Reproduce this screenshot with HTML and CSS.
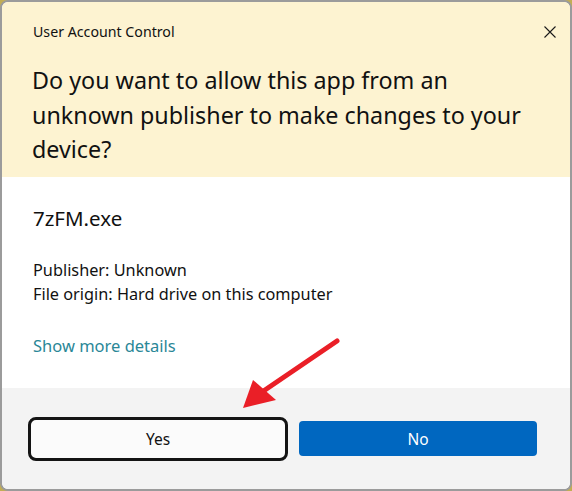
FILE: index.html
```html
<!DOCTYPE html>
<html lang="en">
<head>
<meta charset="utf-8">
<title>User Account Control</title>
<link rel="stylesheet" href="styles.css">
</head>
<body>
<div class="dialog">
  <header class="header">
    <div class="title-row">
      <span class="title">User Account Control</span>
      <svg class="close" width="12" height="12" viewBox="0 0 12 12" aria-hidden="true">
        <path d="M0.5 0.5 L11.5 11.5 M11.5 0.5 L0.5 11.5" stroke="#1a1a1a" stroke-width="1.1" fill="none"/>
      </svg>
    </div>
    <h1 class="question">Do you want to allow this app from an unknown publisher to make changes to your device?</h1>
  </header>
  <section class="content">
    <div class="app-name">7zFM.exe</div>
    <div class="meta">
      <div>Publisher: Unknown</div>
      <div>File origin: Hard drive on this computer</div>
    </div>
    <a class="more" href="#">Show more details</a>
  </section>
  <footer class="footer">
    <button class="btn btn-yes">Yes</button>
    <button class="btn btn-no">No</button>
  </footer>
  <svg class="arrow" width="572" height="491" viewBox="0 0 572 491" aria-hidden="true">
    <line x1="337" y1="341" x2="262" y2="392" stroke="#ea1f27" stroke-width="5" stroke-linecap="round"/>
    <polygon points="243,408 253,380 276,400" fill="#ea1f27"/>
  </svg>
</div>
</body>
</html>
```

FILE: styles.css
```css
* { box-sizing: border-box; }

html, body {
  margin: 0;
  padding: 0;
}

body {
  width: 572px;
  height: 491px;
  background: #c2ad55;
  font-family: "Noto Sans", "Open Sans", sans-serif;
  color: #1b1b1b;
}

.dialog {
  position: relative;
  width: 572px;
  height: 491px;
  border: 2px solid #9b9b9b;
  border-radius: 8px;
  overflow: hidden;
  display: flex;
  flex-direction: column;
  background: #ffffff;
}

.header {
  background: #fdf3d1;
  height: 175px;
  padding: 20px 0 0 31px;
}

.title-row {
  display: flex;
  justify-content: space-between;
  align-items: center;
  height: 20px;
}

.title {
  font-size: 14.2px;
  line-height: 20px;
  color: #111;
}

.close {
  margin-right: 14px;
  margin-top: 0;
}

.question {
  margin: 21px 0 0 -1px;
  font-weight: normal;
  font-size: 23.3px;
  line-height: 34.5px;
  width: 508px;
  color: #111;
}

.content {
  background: #ffffff;
  height: 211px;
  padding: 27px 0 0 31px;
}

.app-name {
  font-size: 20.5px;
  line-height: 28px;
  color: #111;
}

.meta {
  margin-top: 26px;
  font-size: 16.3px;
  line-height: 24px;
  color: #111;
}

.more {
  display: inline-block;
  margin-top: 28px;
  font-size: 16.5px;
  line-height: 24px;
  color: #2a8797;
  text-decoration: none;
}

.footer {
  flex: 1;
  background: #f3f3f3;
  display: flex;
  align-items: center;
  gap: 11px;
  padding: 0 33px 0 26px;
  margin-top: 0;
}

.btn {
  font-family: "Noto Sans", "Open Sans", sans-serif;
  font-size: 15.5px;
  padding: 0;
  cursor: pointer;
}

.btn-yes {
  width: 260px;
  height: 44px;
  border: 3px solid #141414;
  border-radius: 8px;
  background: #fbfbfb;
  color: #111;
}

.btn-no {
  width: 238px;
  height: 35px;
  border: none;
  border-radius: 4px;
  background: #0067c0;
  color: #ffffff;
}

.arrow {
  position: absolute;
  left: -2px;
  top: -2px;
  pointer-events: none;
}
```
